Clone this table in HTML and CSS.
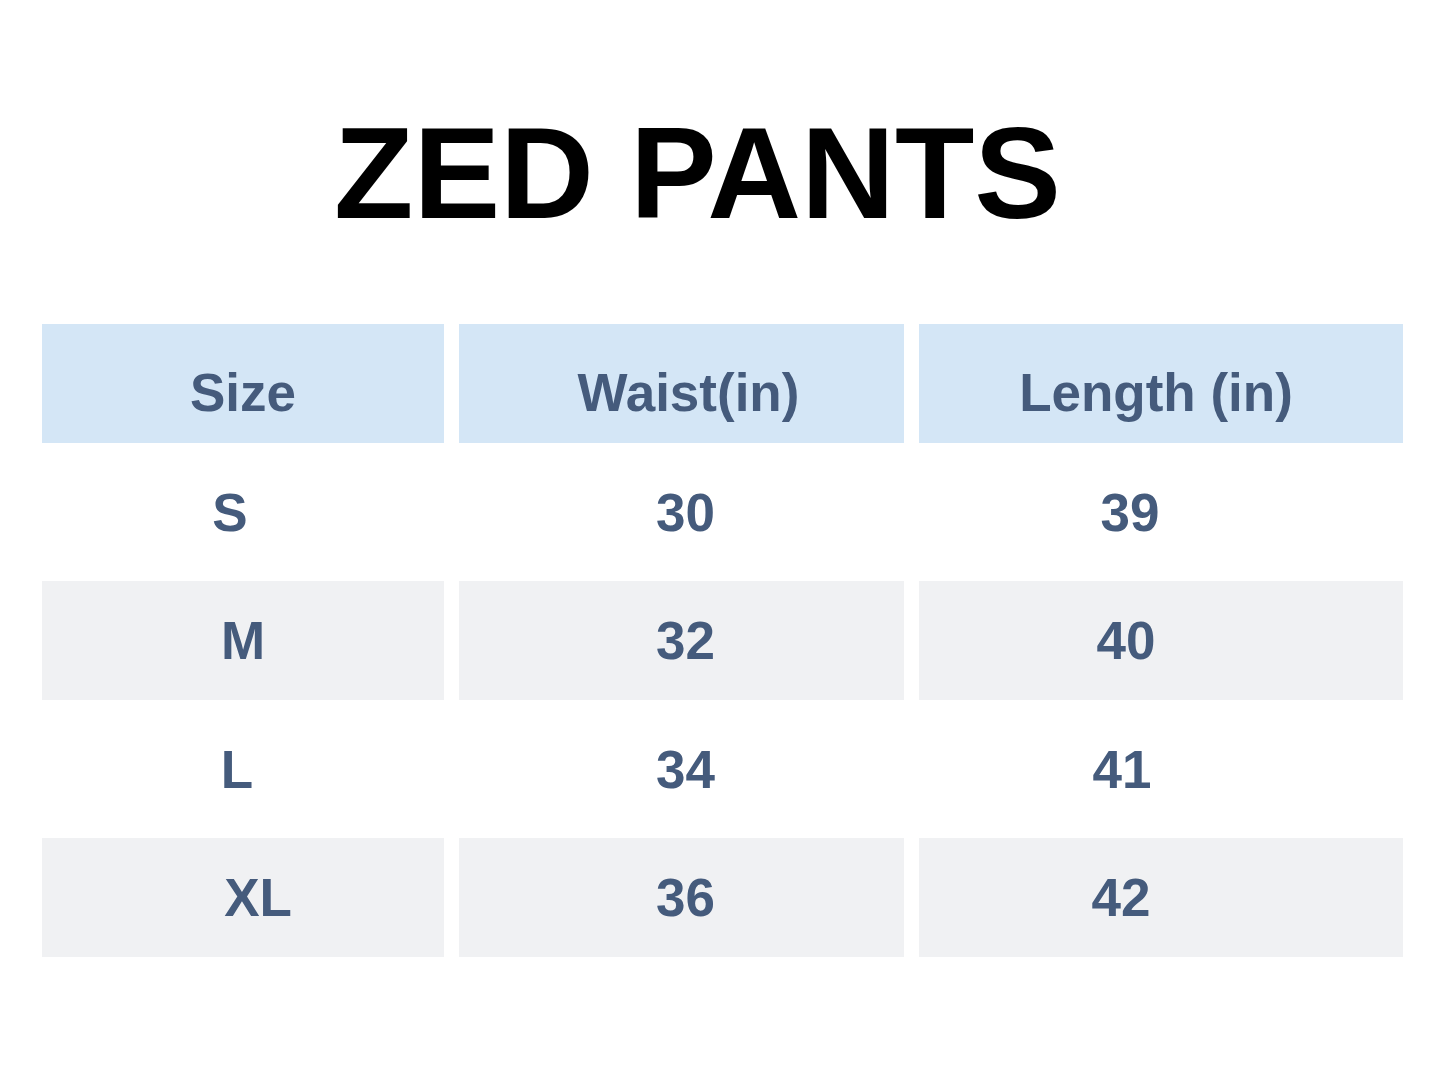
FILE: index.html
```html
<!DOCTYPE html>
<html>
<head>
<meta charset="utf-8">
<link rel="stylesheet" href="styles.css">
</head>
<body>
<main class="page">
  <h1 class="title">ZED PANTS</h1>
  <div class="chart">
    <div class="cell head">Size</div>
    <div class="cell head h2">Waist(in)</div>
    <div class="cell head h3">Length (in)</div>

    <div class="cell plain c1 s">S</div>
    <div class="cell plain c2">30</div>
    <div class="cell plain c3 x39">39</div>

    <div class="cell shade c1">M</div>
    <div class="cell shade c2">32</div>
    <div class="cell shade c3">40</div>

    <div class="cell plain c1 l">L</div>
    <div class="cell plain c2">34</div>
    <div class="cell plain c3 x41">41</div>

    <div class="cell shade c1 xl">XL</div>
    <div class="cell shade c2">36</div>
    <div class="cell shade c3 x42">42</div>
  </div>
</main>
</body>
</html>
```

FILE: styles.css
```css
html, body {
  margin: 0;
  padding: 0;
  background: #ffffff;
}

.page {
  width: 1445px;
  padding-top: 98px;
  font-family: "Liberation Sans", Arial, sans-serif;
}

.title {
  margin: 0;
  height: 150px;
  line-height: 150px;
  font-size: 130px;
  font-weight: 700;
  color: #000000;
  text-align: center;
  padding-right: 50px;
}

.chart {
  margin: 76px 0 0 42px;
  display: grid;
  grid-template-columns: 402px 445px 484px;
  grid-auto-rows: 119px;
  column-gap: 15px;
  row-gap: 9.5px;
}

.cell {
  display: flex;
  align-items: center;
  justify-content: center;
  box-sizing: border-box;
  font-size: 53px;
  font-weight: 700;
  color: #455b7c;
}

.head {
  background: #d4e6f6;
  padding-top: 18px;
}

.head.h2 {
  padding-left: 14px;
}

.head.h3 {
  padding-right: 10px;
}

.plain {
  background: #ffffff;
}

.shade {
  background: #f0f1f3;
}

.c2 {
  padding-left: 8px;
}

.c3 {
  padding-right: 70px;
}

.c3.x39 {
  padding-right: 62px;
}

.c3.x41 {
  padding-right: 78px;
}

.c3.x42 {
  padding-right: 80px;
}

.s {
  padding-right: 26px;
}

.l {
  padding-right: 12px;
}

.xl {
  padding-left: 30px;
}
```
